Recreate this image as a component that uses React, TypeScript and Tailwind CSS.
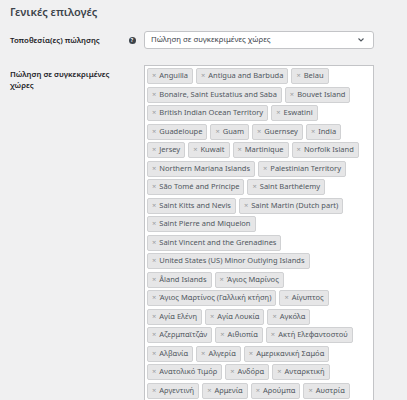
import React from "react";

const rows: string[][] = [
  ["Anguilla", "Antigua and Barbuda", "Belau"],
  ["Bonaire, Saint Eustatius and Saba", "Bouvet Island"],
  ["British Indian Ocean Territory", "Eswatini"],
  ["Guadeloupe", "Guam", "Guernsey", "India"],
  ["Jersey", "Kuwait", "Martinique", "Norfolk Island"],
  ["Northern Mariana Islands", "Palestinian Territory"],
  ["São Tomé and Príncipe", "Saint Barthélemy"],
  ["Saint Kitts and Nevis", "Saint Martin (Dutch part)"],
  ["Saint Pierre and Miquelon"],
  ["Saint Vincent and the Grenadines"],
  ["United States (US) Minor Outlying Islands"],
  ["Åland Islands", "Άγιος Μαρίνος"],
  ["Άγιος Μαρτίνος (Γαλλική κτήση)", "Αίγυπτος"],
  ["Αγία Ελένη", "Αγία Λουκία", "Αγκόλα"],
  ["Αζερμπαϊτζάν", "Αιθιοπία", "Ακτή Ελεφαντοστού"],
  ["Αλβανία", "Αλγερία", "Αμερικανική Σαμόα"],
  ["Ανατολικό Τιμόρ", "Ανδόρα", "Ανταρκτική"],
  ["Αργεντινή", "Αρμενία", "Αρούμπα", "Αυστρία"],
];

function Tag({ name }: { name: string }) {
  return (
    <span className="flex h-[16px] items-center whitespace-nowrap rounded-[2px] border border-[#d0d1d3] bg-[#e6e6e7] px-[4px] text-[7.5px] leading-none text-[#50575e]">
      <span className="mr-[3px] text-[7.5px] text-[#9a9ca0]">×</span>
      {name}
    </span>
  );
}

export default function App() {
  return (
    <div
      className="h-[400px] w-[407px] overflow-hidden bg-[#f0f0f1] text-[#1d2327]"
      style={{ fontFamily: '"Noto Sans", "Open Sans", sans-serif' }}
    >
      <div className="pl-[10px] pt-[5px] text-[11px] font-semibold leading-[14px] text-[#3c434a]">
        Γενικές επιλογές
      </div>
      <div className="mt-[12px] flex items-center">
        <div className="w-[128px] pl-[10px] text-[7.8px] font-semibold leading-[11px]">
          Τοποθεσία(ες) πώλησης
        </div>
        <div className="flex w-[8px] justify-center">
          <span className="flex h-[7px] w-[7px] items-center justify-center rounded-full bg-[#3c434a] text-[5px] font-bold leading-none text-white">
            ?
          </span>
        </div>
        <div className="ml-[8px] flex h-[18px] w-[230px] items-center justify-between rounded-[3px] border border-[#c3c4c7] bg-white pl-[6px] pr-[8px] text-[7.8px] text-[#3c434a]">
          <span>Πώληση σε συγκεκριμένες χώρες</span>
          <svg width="8" height="6" viewBox="0 0 8 6" fill="none">
            <path d="M1.5 1.5 L4 4 L6.5 1.5" stroke="#50575e" strokeWidth="1.1" />
          </svg>
        </div>
      </div>
      <div className="mt-[16px] flex">
        <div className="w-[144px] pl-[10px] pt-[4px] text-[7.8px] font-semibold leading-[11px]">
          Πώληση σε συγκεκριμένες
          <br />
          χώρες
        </div>
        <div className="flex h-[400px] w-[230px] flex-col gap-[2.5px] border border-[#c3c4c7] bg-white pl-[2px] pt-[2px]">
          {rows.map((r, i) => (
            <div key={i} className="flex gap-[3px]">
              {r.map((n) => (
                <Tag key={n} name={n} />
              ))}
            </div>
          ))}
        </div>
      </div>
    </div>
  );
}
